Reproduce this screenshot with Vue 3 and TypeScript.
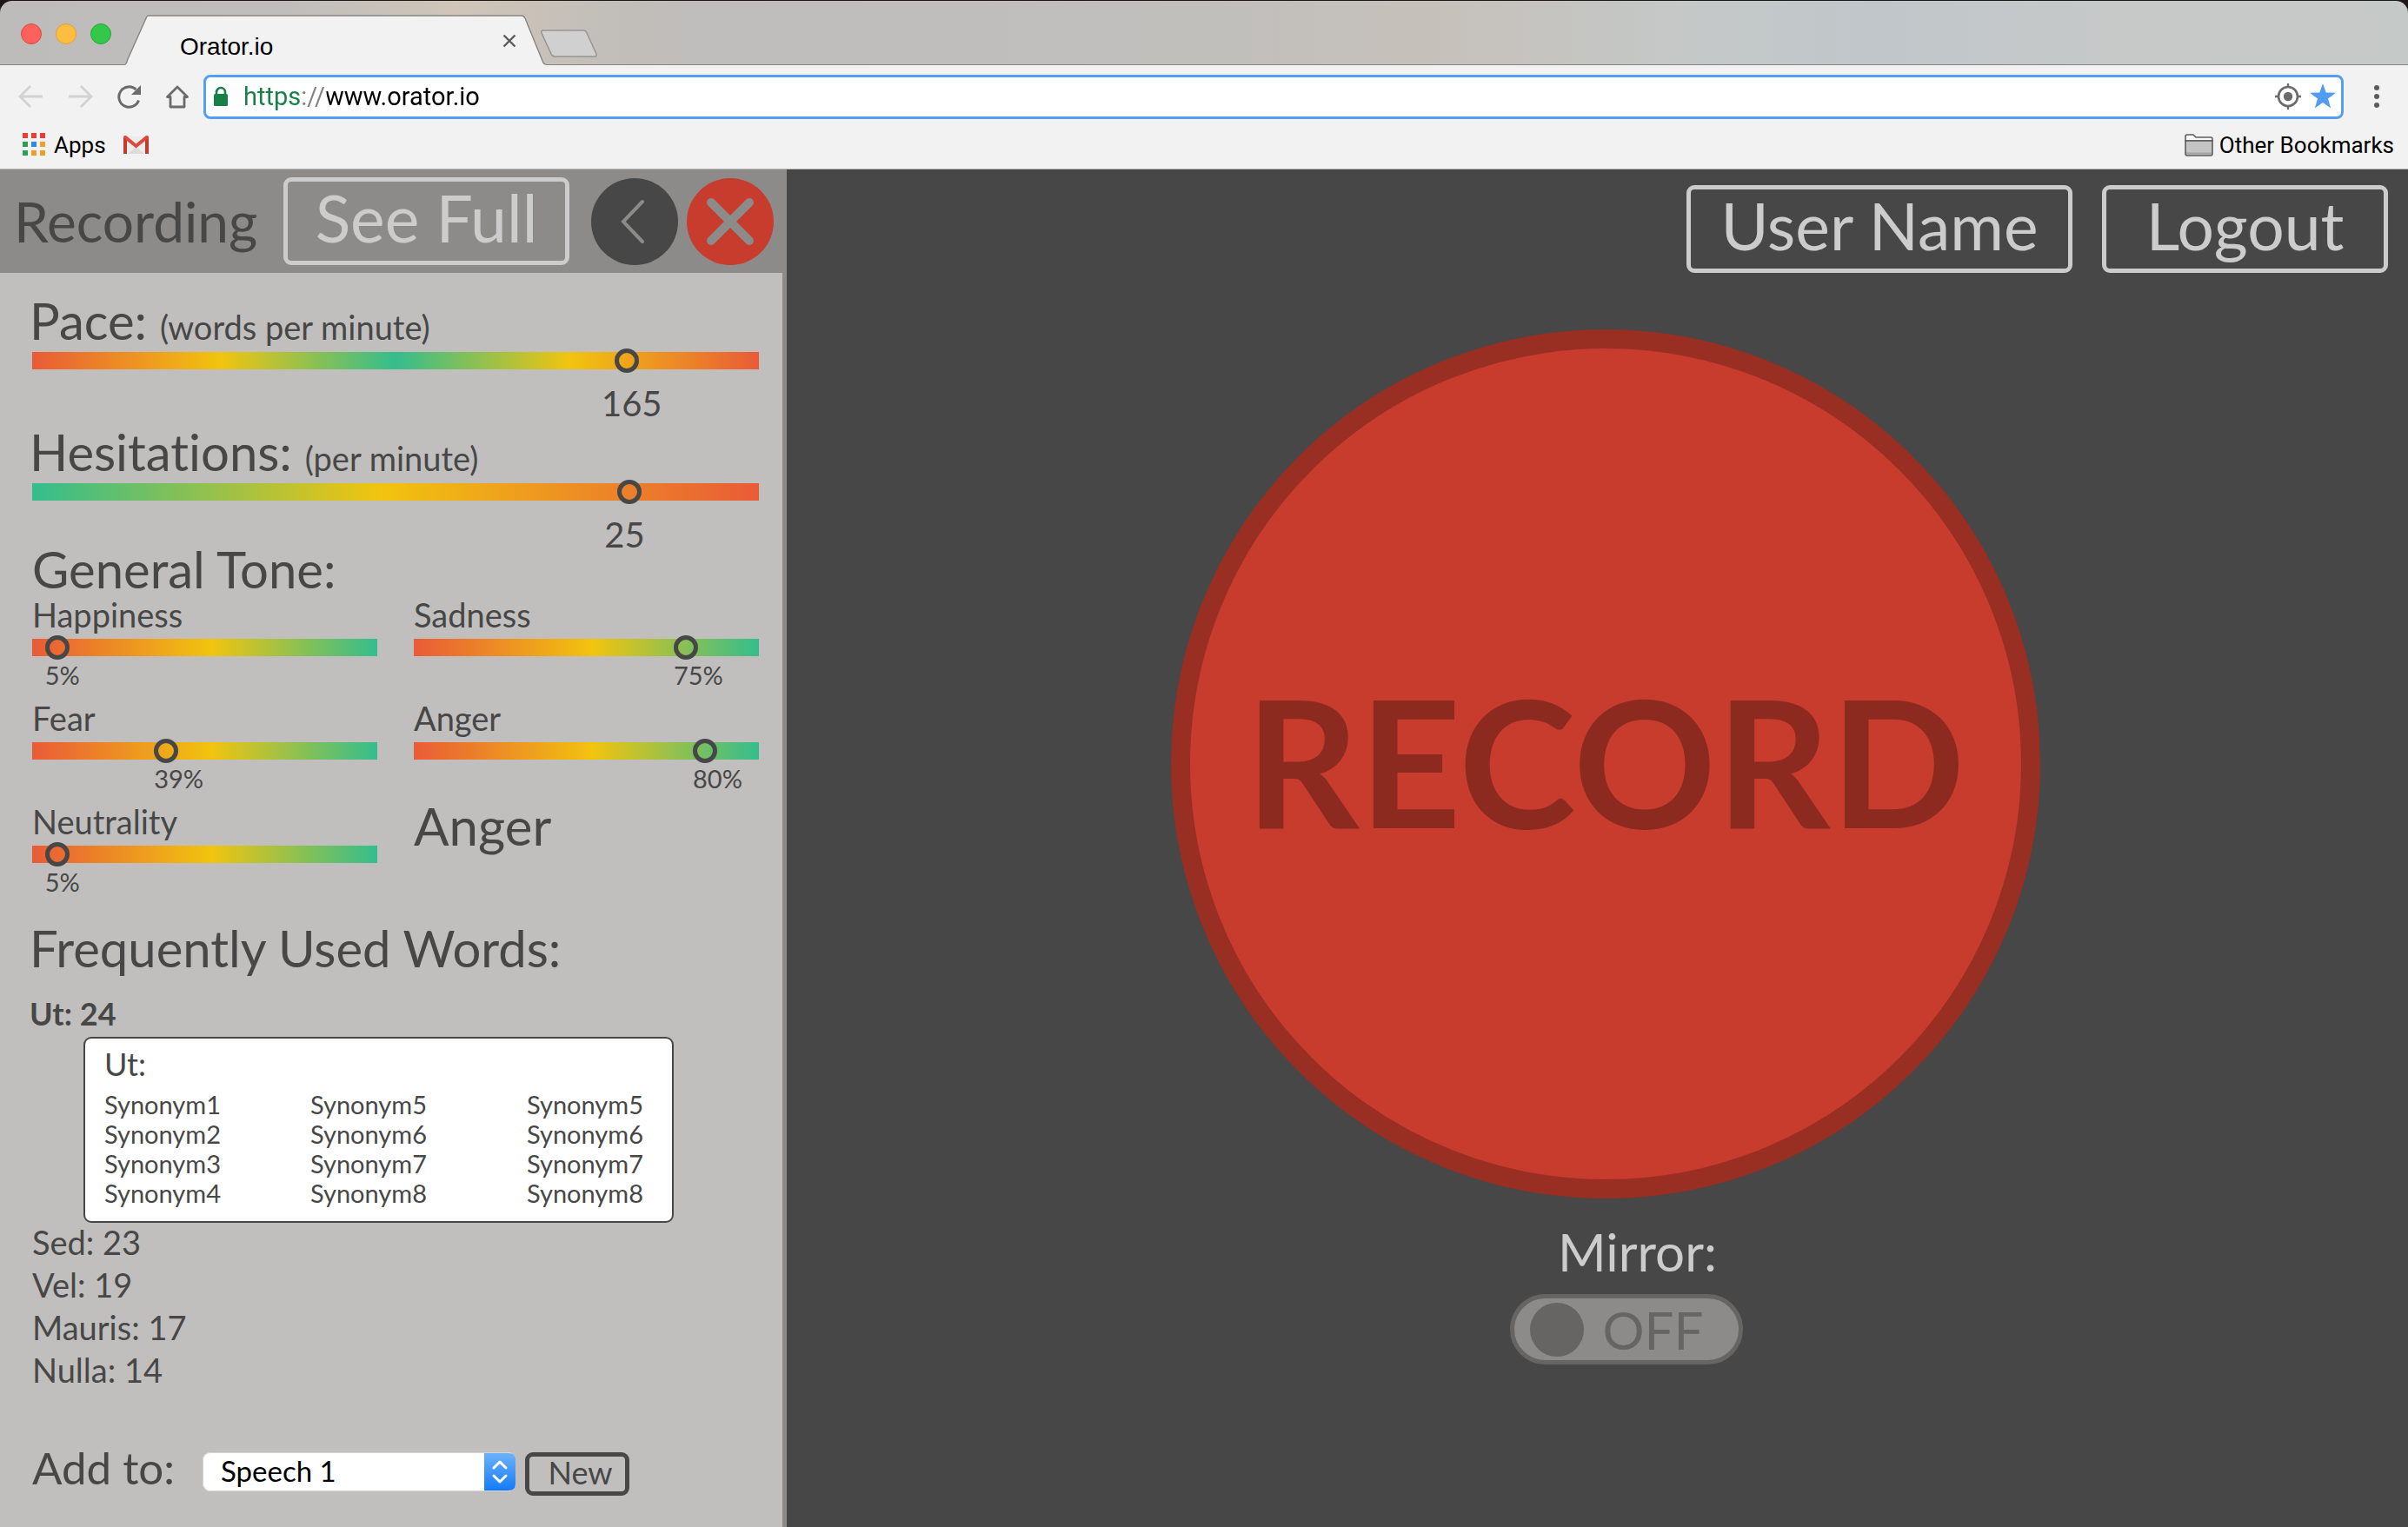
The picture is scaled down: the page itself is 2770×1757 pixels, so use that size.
<script setup lang="ts">
import { ref } from 'vue'

interface Meter {
  id: string
  label: string
  unit: string
  value: number
  max: number
  scale: string
}

interface Tone {
  id: string
  label: string
  percent: number
  position: number
}

const url = ref('https://www.orator.io')
const speech = ref('Speech 1')
const mirror = ref(false)

const meters: Meter[] = [
  { id: 'pace', label: 'Pace:', unit: '(words per minute)', value: 165, max: 199, scale: 'scale-centre' },
  { id: 'hesitations', label: 'Hesitations:', unit: '(per minute)', value: 25, max: 30, scale: 'scale-low' },
]

const tones: Tone[] = [
  { id: 'happiness', label: 'Happiness', percent: 5, position: 4 },
  { id: 'sadness', label: 'Sadness', percent: 75, position: 81 },
  { id: 'fear', label: 'Fear', percent: 39, position: 38 },
  { id: 'anger', label: 'Anger', percent: 80, position: 87 },
  { id: 'neutrality', label: 'Neutrality', percent: 5, position: 4 },
]

const synonyms: string[][] = [
  ['Synonym1', 'Synonym2', 'Synonym3', 'Synonym4'],
  ['Synonym5', 'Synonym6', 'Synonym7', 'Synonym8'],
  ['Synonym5', 'Synonym6', 'Synonym7', 'Synonym8'],
]

const words = [
  { word: 'Sed', count: 23 },
  { word: 'Vel', count: 19 },
  { word: 'Mauris', count: 17 },
  { word: 'Nulla', count: 14 },
]

const appDots = ['#ee3b35', '#ee3b35', '#ee3b35', '#2f9e55', '#2b8af0', '#f0a12a', '#2f9e55', '#eda027', '#eda027']
</script>

<template>
  <div class="window">
    <header class="chrome">
      <div class="tab-strip">
        <div class="lights">
          <button class="light close" aria-label="Close window"></button>
          <button class="light minimise" aria-label="Minimise window"></button>
          <button class="light zoom" aria-label="Zoom window"></button>
        </div>
        <div class="tab">
          <svg class="tab-shape" viewBox="0 0 484 58" aria-hidden="true">
            <path d="M0 57 C2 56 2 54 3 51 L24 4 C25 1 26 1 28 1 H456 C458 1 459 2 460 4 L480 53 C481 56 482 57 484 57 V58 H0 Z" fill="#f2f2f2" />
            <path d="M0 57 C2 56 2 54 3 51 L24 4 C25 1 26 1 28 1 H456 C458 1 459 2 460 4 L480 53 C481 56 482 57 484 57" fill="none" stroke="#868482" stroke-width="1.4" />
          </svg>
          <span class="tab-title">Orator.io</span>
          <button class="icon-button tab-close" aria-label="Close tab">
            <svg width="16" height="16" viewBox="0 0 16 16"><path d="M1.500 1.500 L14.500 14.500 M14.500 1.500 L1.500 14.500" stroke="#5a5a5a" stroke-width="2.400" /></svg>
          </button>
        </div>
        <button class="icon-button new-tab" aria-label="New tab">
          <svg width="68" height="34" viewBox="0 0 68 34"><path d="M4 1 H50 Q53 1 54 4 L65 28 Q66 31 63 31 H18 Q14 31 13 28 L2 4 Q1 1 4 1 Z" fill="#d0d0d0" stroke="#979593" stroke-width="1.500" /></svg>
        </button>
      </div>

      <div class="toolbar">
        <button class="icon-button" aria-label="Back">
          <svg width="30" height="28" viewBox="0 0 30 28"><path d="M28 14 H3 M14 2 L2 14 L14 26" fill="none" stroke="#d2d2d2" stroke-width="2.800" /></svg>
        </button>
        <button class="icon-button" aria-label="Forward">
          <svg width="30" height="28" viewBox="0 0 30 28"><path d="M2 14 H27 M16 2 L28 14 L16 26" fill="none" stroke="#d2d2d2" stroke-width="2.800" /></svg>
        </button>
        <button class="icon-button" aria-label="Reload">
          <svg width="30" height="28" viewBox="0 0 30 28"><path d="M26.500 18.500 A11.700 11.700 0 1 1 23.500 6" fill="none" stroke="#6b6b6b" stroke-width="3" /><path d="M29 1 V12 H18 Z" fill="#6b6b6b" /></svg>
        </button>
        <button class="icon-button" aria-label="Home">
          <svg width="30" height="28" viewBox="0 0 30 28"><path d="M15 3 L3.500 14.500 H7 V26 H23 V14.500 H26.500 Z" fill="none" stroke="#6b6b6b" stroke-width="2.800" stroke-linejoin="round" /></svg>
        </button>
        <div class="address">
          <svg width="18" height="24" viewBox="0 0 18 24" aria-hidden="true"><path d="M4 11 V7 A5 5 0 0 1 14 7 V11" fill="none" stroke="#188047" stroke-width="2.600" /><rect x="1" y="9" width="16" height="14" rx="1.500" fill="#188047" /></svg>
          <input v-model="url" class="address-input" type="text" aria-label="Address" spellcheck="false" />
          <button class="icon-button" aria-label="Location">
            <svg width="30" height="30" viewBox="0 0 30 30"><circle cx="15" cy="15" r="11" fill="none" stroke="#6b6b6b" stroke-width="2.600" /><circle cx="15" cy="15" r="5.200" fill="#6b6b6b" /><path d="M15 0 V4 M15 26 V30 M0 15 H4 M26 15 H30" stroke="#6b6b6b" stroke-width="2.400" /></svg>
          </button>
          <button class="icon-button" aria-label="Bookmark this page">
            <svg width="30" height="30" viewBox="0 0 30 30"><path d="M15 0 L18.700 10.500 L30 10.800 L21 17.600 L24.200 28.500 L15 22 L5.800 28.500 L9 17.600 L0 10.800 L11.300 10.500 Z" fill="#549bf2" /></svg>
          </button>
        </div>
        <button class="icon-button menu" aria-label="Menu">
          <svg width="6" height="28" viewBox="0 0 6 28"><circle cx="3" cy="4" r="3" fill="#5c5c5c" /><circle cx="3" cy="14" r="3" fill="#5c5c5c" /><circle cx="3" cy="24" r="3" fill="#5c5c5c" /></svg>
        </button>
      </div>

      <nav class="bookmarks">
        <a href="#apps" class="bookmark">
          <svg width="27" height="27" viewBox="0 0 27 27" aria-hidden="true">
            <rect v-for="(fill, i) in appDots" :key="i" :x="(i % 3) * 10" :y="Math.floor(i / 3) * 10" width="6" height="6" :fill="fill" />
          </svg>
          Apps
        </a>
        <a href="#mail" class="bookmark" aria-label="Mail">
          <svg width="29" height="22" viewBox="0 0 29 22"><path d="M2 1 H27 V21 H2 Z" fill="#ececec" /><path d="M5 21 L14.500 13 L24 21 Z" fill="#dcdcdc" /><path d="M0 2 Q0 0 2 0 L4 2 V21 H0 Z M29 2 Q29 0 27 0 L25 2 V21 H29 Z" fill="#c63a2e" /><path d="M1 1 L14.500 12 L28 1" fill="none" stroke="#db4a3c" stroke-width="4" /></svg>
        </a>
        <a href="#other" class="bookmark other">
          <svg width="33" height="26" viewBox="0 0 33 26" aria-hidden="true"><path d="M1 3 Q1 1 3 1 H10 L13 4 H30 Q32 4 32 6 V8 H1 Z" fill="#fafafa" stroke="#5c5c5c" stroke-width="1.600" /><path d="M1 8 H32 V23 Q32 25 30 25 H3 Q1 25 1 23 Z" fill="#c4c4c4" stroke="#5c5c5c" stroke-width="1.600" /><path d="M2 22.500 H31" stroke="#a2a2a2" stroke-width="2" /></svg>
          Other Bookmarks
        </a>
      </nav>
    </header>

    <div class="app">
      <aside class="panel">
        <div class="panel-head">
          <h1>Recording</h1>
          <button class="outlined see-full">See Full</button>
          <button class="round back" aria-label="Back">
            <svg width="100" height="100" viewBox="0 0 100 100"><path d="M59 27 L37 50 L59 73" fill="none" stroke="#8c8b89" stroke-width="4" stroke-linecap="round" /></svg>
          </button>
          <button class="round dismiss" aria-label="Close">
            <svg width="100" height="100" viewBox="0 0 100 100"><path d="M28 28 L72 72 M72 28 L28 72" fill="none" stroke="#8c8b89" stroke-width="10" stroke-linecap="round" /></svg>
          </button>
        </div>

        <div class="panel-body">
          <section v-for="m in meters" :key="m.id" class="meter">
            <label :for="m.id" class="title">{{ m.label }} <small>{{ m.unit }}</small></label>
            <input :id="m.id" type="range" class="slider" :class="m.scale" min="0" :max="m.max" :value="m.value" />
            <output :for="m.id" class="reading" :style="{ '--at': m.value / m.max }">{{ m.value }}</output>
          </section>

          <h2 class="title">General Tone:</h2>
          <div class="tones">
            <div v-for="t in tones" :key="t.id" class="tone">
              <label :for="t.id">{{ t.label }}</label>
              <input :id="t.id" type="range" class="slider scale-high" min="0" max="100" :value="t.position" />
              <output :for="t.id" :style="{ '--at': t.position / 100 }">{{ t.percent }}%</output>
            </div>
            <p class="dominant">Anger</p>
          </div>

          <h2 class="title words-title">Frequently Used Words:</h2>
          <p class="word selected">Ut: 24</p>
          <div class="synonyms">
            <h3>Ut:</h3>
            <div class="synonym-columns">
              <ul v-for="(column, c) in synonyms" :key="c">
                <li v-for="s in column" :key="s">{{ s }}</li>
              </ul>
            </div>
          </div>
          <ul class="words">
            <li v-for="w in words" :key="w.word" class="word">{{ w.word }}: {{ w.count }}</li>
          </ul>

          <div class="add-row">
            <label for="speech">Add to:</label>
            <span class="picker">
              <select id="speech" v-model="speech">
                <option>Speech 1</option>
              </select>
              <svg class="picker-arrows" width="36" height="43" viewBox="0 0 36 43" aria-hidden="true">
                <defs><linearGradient id="arrows" x1="0" y1="0" x2="0" y2="1"><stop offset="0" stop-color="#6cb2fa" /><stop offset="1" stop-color="#157bfb" /></linearGradient></defs>
                <path d="M0 0 H28 Q36 0 36 8 V35 Q36 43 28 43 H0 Z" fill="url(#arrows)" />
                <path d="M11 17 L18 10 L25 17 M11 26 L18 33 L25 26" fill="none" stroke="#fff" stroke-width="3" stroke-linecap="round" stroke-linejoin="round" />
              </svg>
            </span>
            <button class="new">New</button>
          </div>
        </div>
      </aside>

      <main class="stage">
        <div class="account">
          <button class="outlined user">User Name</button>
          <button class="outlined logout">Logout</button>
        </div>
        <div class="booth">
          <button class="record">RECORD</button>
          <div class="mirror">
            <label for="mirror" class="mirror-label">Mirror:</label>
            <label class="toggle">
              <input id="mirror" v-model="mirror" type="checkbox" role="switch" />
              <span>{{ mirror ? 'ON' : 'OFF' }}</span>
            </label>
          </div>
        </div>
      </main>
    </div>
  </div>
</template>

<style>
body {
  margin: 0;
  background: #1f1618;
}
</style>

<style scoped>
.window,
.window * {
  box-sizing: border-box;
}

.window {
  display: flex;
  flex-direction: column;
  min-height: 100vh;
  font-family: Lato, "Liberation Sans", sans-serif;
  font-variant-ligatures: none;
  color: #474747;
}

h1,
h2,
h3,
p,
ul {
  margin: 0;
  padding: 0;
  font-weight: 400;
  list-style: none;
}

button,
input,
select {
  margin: 0;
  padding: 0;
  border: 0;
  font: inherit;
  color: inherit;
  background: none;
}

svg {
  display: block;
  flex: none;
}

/* browser chrome */
.chrome {
  padding-top: 1px;
  border-bottom: 1px solid #b2b4b4;
  border-radius: 14px 14px 0 0;
  font-family: Roboto, "Liberation Sans", sans-serif;
  color: #000;
}

.tab-strip {
  display: flex;
  height: 74px;
  border-bottom: 1px solid #868482;
  border-radius: 14px 14px 0 0;
  background: linear-gradient(90deg, #bdbcbb 0, #c0bebc 12%, #d0c5b8 19%, #c2beb9 25%, #bfbebc 30%, #c0bfbc 50%, #c6c0ba 59%, #c4c8c7 70%, #c0c6ca 78%, #c6c9c8 88%, #c5c9c8 100%);
}

.lights {
  display: flex;
  gap: 16px;
  padding: 26px 16px 0 24px;
}

.light {
  width: 24px;
  height: 24px;
  border: 1px solid #e2463f;
  border-radius: 50%;
  background: #fc615c;
}

.light.minimise {
  border-color: #dfa033;
  background: #fdbd41;
}

.light.zoom {
  border-color: #27a834;
  background: #34c84a;
}

.tab {
  position: relative;
  display: flex;
  justify-content: space-between;
  align-items: flex-start;
  width: 484px;
  height: 58px;
  margin-top: 16px;
  padding: 0 34px 0 63px;
}

.tab-shape {
  position: absolute;
  inset: 0;
  width: 484px;
  height: 58px;
}

.tab-title {
  position: relative;
  padding-top: 19px;
  font-family: "Liberation Sans", sans-serif;
  font-size: 28px;
  line-height: 36px;
}

.icon-button {
  display: flex;
  align-items: center;
}

.tab-close {
  position: relative;
  padding-top: 22px;
}

.new-tab {
  align-self: flex-start;
  margin: 33px 0 0 -7px;
}

.toolbar {
  display: flex;
  align-items: center;
  gap: 26px;
  height: 72px;
  padding: 0 33px 0 21px;
  background: #f2f2f2;
}

.address {
  display: flex;
  flex: 1;
  align-items: center;
  gap: 10px;
  height: 51px;
  margin: 0 9px 0 -11px;
  padding: 0 6px 0 8px;
  border: 3px solid #559ff0;
  border-radius: 8px;
  background: #fff;
}

.address-input {
  flex: 1;
  min-width: 0;
  margin-left: 7px;
  font-size: 29px;
  line-height: 40px;
  outline: none;
  caret-color: #000;
  color: transparent;
  background: linear-gradient(90deg, #188047 67px, #808080 67px, #808080 96px, #000 96px);
  background-clip: text;
  -webkit-background-clip: text;
}

.bookmarks {
  display: flex;
  align-items: center;
  gap: 20px;
  height: 47px;
  padding: 0 16px 8px 26px;
  background: #f2f2f2;
}

.bookmark {
  display: flex;
  align-items: center;
  gap: 9px;
  font-size: 26px;
  line-height: 32px;
  color: #000;
  text-decoration: none;
}

.other {
  gap: 7px;
  margin-left: auto;
}

/* application */
.app {
  display: flex;
  flex: 1;
}

.panel {
  display: flex;
  flex-direction: column;
  flex: 0 0 905px;
}

.panel-head {
  display: flex;
  align-items: center;
  height: 119px;
  padding: 0 15px 0 16px;
  background: #8c8b89;
}

.panel-head h1 {
  flex: 1;
  font-size: 64px;
  line-height: 72px;
}

.outlined {
  height: 101px;
  padding-bottom: 10px;
  border: 5px solid #ccc;
  border-radius: 9px;
  font-size: 75px;
  line-height: 80px;
  color: #ccc;
}

.see-full,
.logout {
  width: 329px;
}

.user {
  width: 444px;
}

.round {
  width: 100px;
  height: 100px;
  border-radius: 50%;
}

.back {
  margin: 0 10px 0 25px;
  background: #474747;
}

.dismiss {
  background: #c73c2c;
}

.panel-body {
  flex: 1;
  padding: 31px 27px 32px 37px;
  border-right: 5px solid #8c8b89;
  background: #c0bfbd;
}

.title {
  display: block;
  font-size: 58px;
  line-height: 48px;
}

.title small {
  font-size: 38px;
  line-height: 1px;
}

.meter .title,
.words-title,
.selected {
  margin-left: -3px;
}

.meter + .meter {
  margin-top: 16px;
}

.slider {
  display: block;
  width: 100%;
  height: 28px;
  appearance: none;
  -webkit-appearance: none;
}

.slider::-webkit-slider-runnable-track {
  height: 20px;
  background: var(--scale);
}

.slider::-webkit-slider-thumb {
  width: 28px;
  height: 28px;
  margin-top: -4px;
  border: 5px solid #474747;
  border-radius: 50%;
  background: transparent;
  appearance: none;
  -webkit-appearance: none;
}

.scale-centre {
  --scale: linear-gradient(90deg, #e95b37, #f1c40f 26%, #34bd8d 50%, #f1c40f 74%, #e95b37);
}

.scale-low {
  --scale: linear-gradient(90deg, #34bd8d, #f1c40f 48%, #e95b37);
}

.scale-high {
  --scale: linear-gradient(90deg, #e95b37, #f1c40f 52%, #34bd8d);
}

.meter .slider {
  margin: 8px 0 19px;
}

.reading {
  display: block;
  margin-left: calc((100% - 28px) * var(--at) - 15px);
  font-size: 40px;
  line-height: 32px;
}

.tones {
  display: grid;
  grid-template-columns: 1fr 1fr;
  gap: 19px 42px;
  margin-top: 12px;
}

.tone label {
  display: block;
  font-size: 38px;
  line-height: 32px;
}

.tone .slider {
  margin: 8px 0 4px;
}

.tone output {
  display: block;
  margin-left: calc((100% - 28px) * var(--at));
  font-size: 29px;
  line-height: 28px;
}

.dominant {
  font-size: 60px;
  line-height: 42px;
}

.words-title {
  margin-top: 38px;
  margin-bottom: 31px;
}

.word {
  font-size: 38px;
  line-height: 40px;
}

.selected {
  font-size: 36px;
  font-weight: 700;
}

.words {
  display: grid;
  gap: 9px;
}

.synonyms {
  width: 679px;
  margin: 7px 0 2px 59px;
  padding: 9px 22px 15px;
  border: 2px solid #474747;
  border-radius: 9px;
  background: #fff;
}

.synonyms h3 {
  font-size: 36px;
  line-height: 40px;
}

.synonym-columns {
  display: grid;
  grid-template-columns: 237px 249px auto;
  margin-top: 10px;
  font-size: 29px;
  line-height: 34px;
}

.add-row {
  display: flex;
  align-items: flex-start;
  margin-top: 75px;
}

.add-row label {
  width: 196px;
  font-size: 51px;
  line-height: 36px;
}

.picker {
  position: relative;
  display: flex;
}

select {
  width: 360px;
  height: 45px;
  padding: 0 60px 4px 21px;
  border-radius: 9px;
  font-size: 33px;
  color: #000;
  background: #fff;
  box-shadow: inset 0 0 0 1px #d4d4d4;
  appearance: none;
  -webkit-appearance: none;
}

.picker-arrows {
  position: absolute;
  top: 1px;
  right: 0;
  pointer-events: none;
}

.new {
  width: 120px;
  height: 50px;
  margin-left: 11px;
  padding: 0 0 4px 7px;
  border: 5px solid #474747;
  border-radius: 9px;
  font-size: 36px;
  line-height: 36px;
}

.stage {
  flex: 1;
  min-width: 0;
  background: #474747;
}

.account {
  display: flex;
  justify-content: flex-end;
  gap: 34px;
  padding: 18px 23px 0;
}

.booth {
  display: flex;
  flex-direction: column;
  align-items: center;
  gap: 30px;
  padding: 65px 0 60px 18px;
}

.record {
  width: 1000px;
  height: 1000px;
  padding-bottom: 10px;
  border: 22px solid #992e22;
  border-radius: 50%;
  font-size: 204px;
  font-weight: 700;
  color: #8c2a20;
  background: #c73c2c;
}

.mirror {
  display: flex;
  flex-direction: column;
  align-items: center;
  gap: 18px;
  margin-left: 48px;
}

.mirror-label {
  padding-left: 26px;
  font-size: 60px;
  line-height: 62px;
  color: #ccc;
}

.toggle {
  display: flex;
  align-items: center;
  gap: 22px;
  width: 268px;
  height: 81px;
  padding-left: 18px;
  border: 5px solid #666563;
  border-radius: 41px;
  font-size: 60px;
  line-height: 72px;
  color: #666563;
  background: #8c8b89;
}

.toggle input {
  width: 62px;
  height: 62px;
  border-radius: 50%;
  background: #666563;
  appearance: none;
  -webkit-appearance: none;
}
</style>
